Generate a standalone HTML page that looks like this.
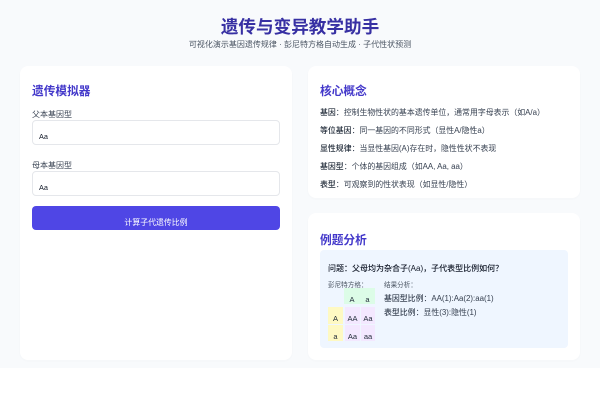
<!DOCTYPE html>
<html lang="zh-CN">
<head>
<meta charset="utf-8">
<title>遗传与变异教学助手</title>
<style>
html,body{margin:0;padding:0;width:600px;height:400px;overflow:hidden;background:#fff}
body{position:relative;font-family:"Liberation Sans","Noto Sans CJK SC",sans-serif;color:#1f2937}
.abs,.t{position:absolute}
.t{white-space:nowrap;line-height:1}
.card{position:absolute;background:#fff;border-radius:8px;box-shadow:0 1px 3px rgba(0,0,0,.02)}
.h2{font-size:11.7px;font-weight:700;color:#4338ca}
.input{position:absolute;left:32px;width:246px;height:23px;background:#fff;border:1px solid #e5e7eb;border-radius:4px}
.label{font-size:8px;color:#374151}
.val{font-size:7.3px;color:#111827}
.li{font-size:7.9px;color:#374151;left:320px}
.li b{font-weight:500;color:#1f2937}
.c{position:absolute;font-size:7.5px;text-align:center;color:#1f2937;box-sizing:border-box}
.g{background:#dcfce7}.y{background:#fef9c3}.p{background:#f3e8ff}
</style>
</head>
<body>
<div class="abs" style="left:0;top:0;width:600px;height:368px;background:#f8fafc"></div>

<div class="t" style="left:0;width:600px;text-align:center;top:19px;font-size:17.6px;font-weight:700;color:#3730a3">遗传与变异教学助手</div>
<div class="t" style="left:0;width:600px;text-align:center;top:41px;font-size:8px;color:#4b5563">可视化演示基因遗传规律 · 彭尼特方格自动生成 · 子代性状预测</div>

<div class="card" style="left:20px;top:66px;width:272px;height:294px"></div>
<div class="t h2" style="left:32px;top:86px">遗传模拟器</div>
<div class="t label" style="left:32px;top:111px">父本基因型</div>
<div class="input" style="top:120px"></div>
<div class="t val" style="left:39px;top:133px">Aa</div>
<div class="t label" style="left:32px;top:162px">母本基因型</div>
<div class="input" style="top:171px"></div>
<div class="t val" style="left:39px;top:184px">Aa</div>
<div class="abs" style="left:32px;top:206px;width:248px;height:24px;background:#4f46e5;border-radius:4px"></div>
<div class="t" style="left:32px;width:248px;text-align:center;top:219px;font-size:7.9px;color:#fff">计算子代遗传比例</div>

<div class="card" style="left:308px;top:66px;width:272px;height:132px"></div>
<div class="t h2" style="left:320px;top:86px">核心概念</div>
<div class="t li" style="top:109px"><b>基因</b>：控制生物性状的基本遗传单位，通常用字母表示（如A/a）</div>
<div class="t li" style="top:127px"><b>等位基因</b>：同一基因的不同形式（显性A/隐性a）</div>
<div class="t li" style="top:145px"><b>显性规律</b>：当显性基因(A)存在时，隐性性状不表现</div>
<div class="t li" style="top:163px"><b>基因型</b>：个体的基因组成（如AA, Aa, aa）</div>
<div class="t li" style="top:181px"><b>表型</b>：可观察到的性状表现（如显性/隐性）</div>

<div class="card" style="left:308px;top:213px;width:272px;height:147px"></div>
<div class="t h2" style="left:320px;top:235px">例题分析</div>
<div class="abs" style="left:320px;top:250px;width:248px;height:98px;background:#eff6ff;border-radius:4px"></div>
<div class="t" style="left:328px;top:265px;font-size:8px;font-weight:500;color:#111827">问题：父母均为杂合子(Aa)，子代表型比例如何？</div>
<div class="t" style="left:328px;top:283px;font-size:6.6px;color:#4b5563">彭尼特方格：</div>
<div class="t" style="left:384px;top:283px;font-size:6.6px;color:#4b5563">结果分析：</div>
<div class="t" style="left:384px;top:295px;font-size:7.9px;color:#374151"><b style="font-weight:500">基因型比例</b>：AA(1):Aa(2):aa(1)</div>
<div class="t" style="left:384px;top:309px;font-size:7.9px;color:#374151"><b style="font-weight:500">表型比例</b>：显性(3):隐性(1)</div>

<div class="c g" style="left:344px;top:288px;width:16px;height:16px;line-height:24px">A</div>
<div class="c g" style="left:360px;top:288px;width:15px;height:16px;line-height:24px">a</div>
<div class="c y" style="left:328px;top:307px;width:15px;height:17px;line-height:23px">A</div>
<div class="c p" style="left:345px;top:307px;width:15px;height:17px;line-height:23px">AA</div>
<div class="c p" style="left:361px;top:307px;width:14px;height:17px;line-height:23px">Aa</div>
<div class="c y" style="left:328px;top:325px;width:15px;height:16px;line-height:23px;overflow:hidden">a</div>
<div class="c p" style="left:345px;top:325px;width:15px;height:16px;line-height:23px;overflow:hidden">Aa</div>
<div class="c p" style="left:361px;top:325px;width:14px;height:16px;line-height:23px;overflow:hidden">aa</div>
</body>
</html>
